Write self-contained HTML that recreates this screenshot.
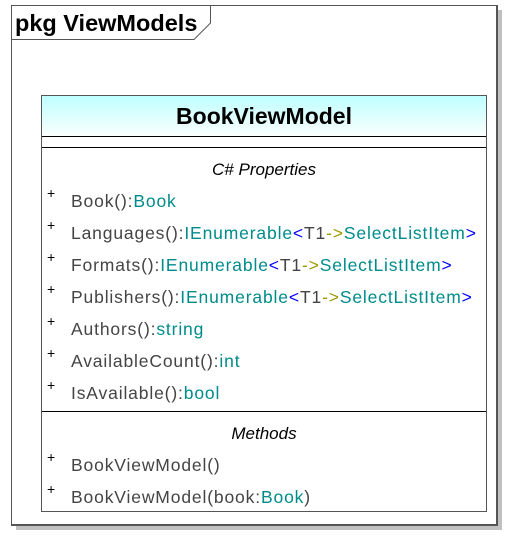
<!DOCTYPE html>
<html><head><style>
body{margin:0;width:527px;height:546px;background:#fff;position:relative;overflow:hidden;font-family:"Liberation Sans",sans-serif}
.sh{position:absolute;left:16px;top:10px;width:486px;height:520px;background:#c0c0c0}
.fr{position:absolute;left:11px;top:5px;width:484px;height:518px;border:2px solid #555;border-width:1px 2px 2px 1px;background:#fff}
.cls{position:absolute;left:41px;top:95px;width:444px;height:415px;border:1px solid #555;background:#fff}
.hd{height:40px;background:linear-gradient(#bfffff,#fafffe);border-bottom:1.5px solid #000;text-align:center;font-weight:bold;font-size:23px;line-height:40px;color:#000}
.t{position:absolute;font-size:17.5px;letter-spacing:0.85px;color:#444;white-space:nowrap}
.p{position:absolute;font-size:14px;color:#000;letter-spacing:0}
.c{color:#008b8b}.b{color:#00f}.o{color:#999900}
.it{position:absolute;left:0;width:444px;text-align:center;font-style:italic;font-size:17px;color:#000}
</style></head><body>
<div class="sh"></div>
<div class="fr"></div>
<svg width="210" height="36" style="position:absolute;left:11px;top:5px">
<path d="M0.5 34.5H183L199.5 18V0" fill="none" stroke="#555" stroke-width="1"/>
<text x="4" y="26" font-family="Liberation Sans" font-weight="bold" font-size="23.5" fill="#000">pkg ViewModels</text>
</svg>
<div class="cls">
<div class="hd">BookViewModel</div>
<div style="position:absolute;left:0;top:51px;width:444px;border-top:1.5px solid #000"></div>
<div class="it" style="top:64px">C# Properties</div>
<div style="position:absolute;left:0;top:315px;width:444px;border-top:1.5px solid #000"></div>
<div class="it" style="top:328px">Methods</div>
</div>
<div class="t" style="left:71px;top:191px"><span class="p" style="left:-24px;top:-6px">+</span>Book():<span class="c">Book</span></div>
<div class="t" style="left:71px;top:223px"><span class="p" style="left:-24px;top:-6px">+</span>Languages():<span class="c">IEnumerable</span><span class="b">&lt;</span>T1<span class="o">-&gt;</span><span class="c">SelectListItem</span><span class="b">&gt;</span></div>
<div class="t" style="left:71px;top:255px"><span class="p" style="left:-24px;top:-6px">+</span>Formats():<span class="c">IEnumerable</span><span class="b">&lt;</span>T1<span class="o">-&gt;</span><span class="c">SelectListItem</span><span class="b">&gt;</span></div>
<div class="t" style="left:71px;top:287px"><span class="p" style="left:-24px;top:-6px">+</span>Publishers():<span class="c">IEnumerable</span><span class="b">&lt;</span>T1<span class="o">-&gt;</span><span class="c">SelectListItem</span><span class="b">&gt;</span></div>
<div class="t" style="left:71px;top:319px"><span class="p" style="left:-24px;top:-6px">+</span>Authors():<span class="c">string</span></div>
<div class="t" style="left:71px;top:351px"><span class="p" style="left:-24px;top:-6px">+</span>AvailableCount():<span class="c">int</span></div>
<div class="t" style="left:71px;top:383px"><span class="p" style="left:-24px;top:-6px">+</span>IsAvailable():<span class="c">bool</span></div>
<div class="t" style="left:71px;top:455px"><span class="p" style="left:-24px;top:-6px">+</span>BookViewModel()</div>
<div class="t" style="left:71px;top:487px"><span class="p" style="left:-24px;top:-6px">+</span>BookViewModel(book:<span class="c">Book</span>)</div>
</body></html>
